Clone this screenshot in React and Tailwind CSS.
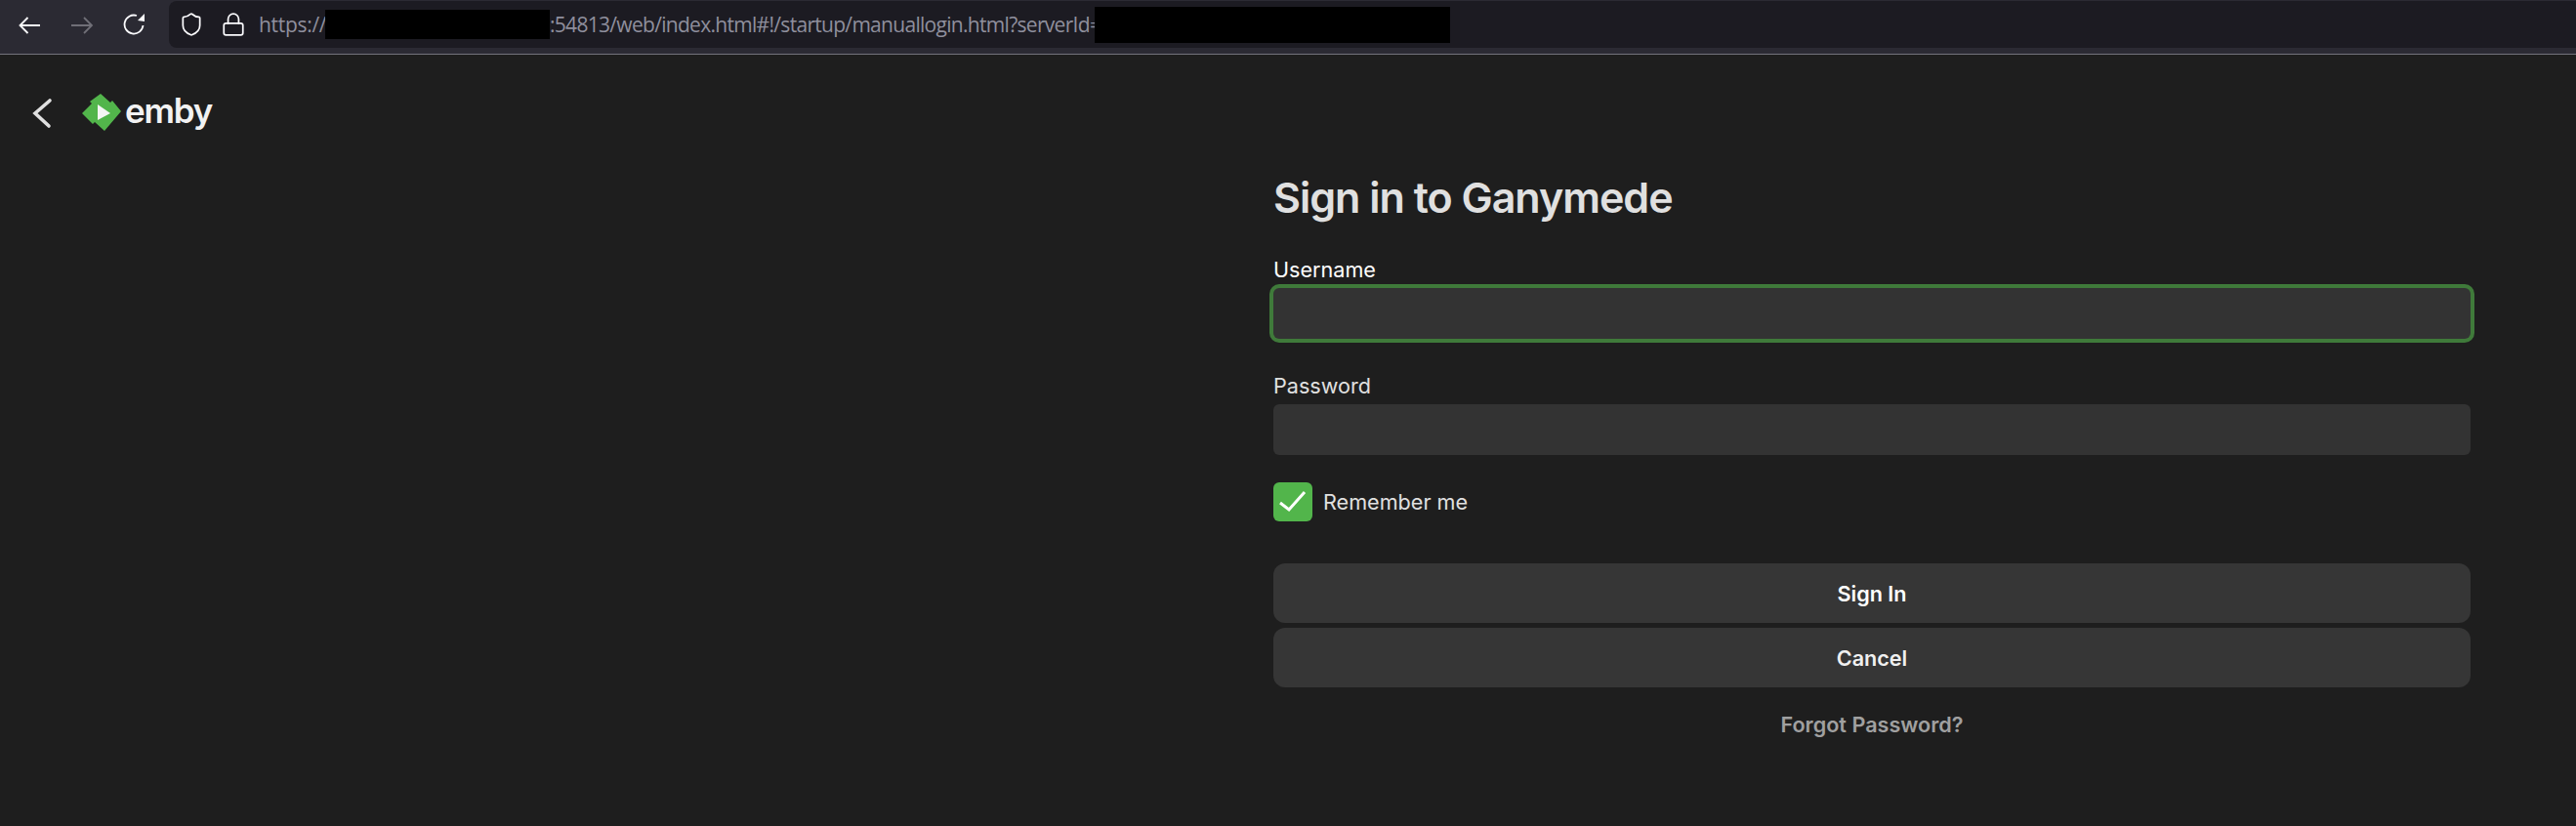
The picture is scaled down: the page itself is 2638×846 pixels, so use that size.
import React from 'react';
import { Lock, Shield } from 'lucide-react';

function NavIcons() {
  return (
    <div className="flex h-[50px] w-[173px] shrink-0 items-center">
      <svg width="24" height="24" viewBox="0 0 24 24" fill="none" stroke="#fbfbfe" strokeWidth="1.8" className="ml-[18px]">
        <path d="M2.5 13 H23 M10.5 5 L2.5 13 L10.5 21" />
      </svg>
      <svg width="24" height="24" viewBox="0 0 24 24" fill="none" stroke="#706f77" strokeWidth="1.8" className="ml-[30px]">
        <path d="M22 13 H1 M14 5 L22 13 L14 21" />
      </svg>
      <svg width="24" height="24" viewBox="0 0 24 24" fill="none" stroke="#fbfbfe" strokeWidth="1.8" className="ml-[30px]">
        <path d="M20.5 13 A9.5 9.5 0 1 1 14 3" />
        <path d="M22 1 V9 L15 8 Z" fill="#fbfbfe" stroke="none" />
      </svg>
    </div>
  );
}

function BrowserBar() {
  return (
    <div className="flex h-[56px] shrink-0 items-start border-b border-[#74737c] bg-[#2b2a33] font-['Open_Sans',sans-serif]">
      <NavIcons />
      <div className="mt-px flex h-[48px] flex-1 items-center rounded-l-lg bg-[#1c1b22] text-[21px] text-[#8f8f9d]">
        <Shield size={26} strokeWidth={1.6} className="ml-[10px] text-[#fbfbfe]" />
        <Lock size={26} strokeWidth={1.6} className="ml-[17px] text-[#fbfbfe]" />
        <span className="ml-[13px] w-[68px] pt-[2px] tracking-[-0.3px]">https://</span>
        <div className="h-[30px] w-[230px] bg-black" />
        <span className="w-[558px] whitespace-nowrap pt-[2px] tracking-[-0.7px]">:54813/web/index.html#!/startup/manuallogin.html?serverId=</span>
        <div className="h-[37px] w-[364px] bg-black" />
      </div>
    </div>
  );
}

function EmbyHeader() {
  return (
    <div className="flex h-[88px] items-start">
      <svg width="24" height="32" viewBox="0 0 24 32" fill="none" stroke="#e0e0e0" strokeWidth="3.6" strokeLinecap="round" className="ml-[31px] mt-[44px]">
        <path d="M20 3 L5 16 L19 29" />
      </svg>
      <svg width="42" height="42" viewBox="0 0 42 42" className="ml-[29px] mt-[39px]">
        <path d="M19 1 L29 10 L31 8 L40 19 L23 39 L13 30 L11 32 L0 21 L10 11 L8 9 Z" fill="#52b54b" />
        <path d="M16 12 L29 21 L16 28 Z" fill="#f5f5f5" />
      </svg>
      <span className="ml-[2px] mt-[37px] text-[35px] font-semibold leading-[40px] tracking-[-1.2px] text-[#f2f2f2]">emby</span>
    </div>
  );
}

function Field({ label, labelClass, focused }) {
  return (
    <div>
      <label className={`block text-[21.6px] leading-[28px] ${labelClass}`}>{label}</label>
      <input
        type="text"
        className={`mt-[5px] block h-[52px] w-full rounded-[6px] bg-[#333333] outline-none ${focused ? 'ring-4 ring-[#3f7a3a]' : ''}`}
      />
    </div>
  );
}

function LoginForm() {
  return (
    <div className="ml-[1304px] w-[1226px] pt-[28px]">
      <h1 className="text-[43px] font-semibold leading-[60px] tracking-[-1px] text-[#e0e0e0]">Sign in to Ganymede</h1>
      <div className="mt-[30px]">
        <Field label="Username" labelClass="text-white" focused />
      </div>
      <div className="mt-[34px]">
        <Field label="Password" labelClass="text-[#e0e0e0]" />
      </div>
      <div className="mt-[28px] flex items-center gap-[11px]">
        <div className="h-[40px] w-[40px] rounded-[6px] bg-[#52b54b]">
          <svg width="40" height="40" viewBox="0 0 40 40" fill="none" stroke="#ffffff" strokeWidth="3">
            <path d="M7 21 L16 28 L32 10" />
          </svg>
        </div>
        <span className="text-[21.6px] text-[#e0e0e0]">Remember me</span>
      </div>
      <div className="mt-[43px] flex flex-col gap-[5px]">
        <button className="h-[61px] rounded-[12px] bg-[#363636] pt-px text-[21.6px] font-semibold text-white">Sign In</button>
        <button className="h-[61px] rounded-[12px] bg-[#363636] pt-px text-[21.6px] font-semibold text-[#f0f0f0]">Cancel</button>
      </div>
      <div className="mt-[23px] text-center text-[21.6px] font-semibold leading-[30px] text-[#a0a0a0]">Forgot Password?</div>
    </div>
  );
}

export default function App() {
  return (
    <div className="flex h-[846px] flex-col overflow-hidden bg-[#1e1e1e] font-['Inter',sans-serif]">
      <BrowserBar />
      <EmbyHeader />
      <LoginForm />
    </div>
  );
}
